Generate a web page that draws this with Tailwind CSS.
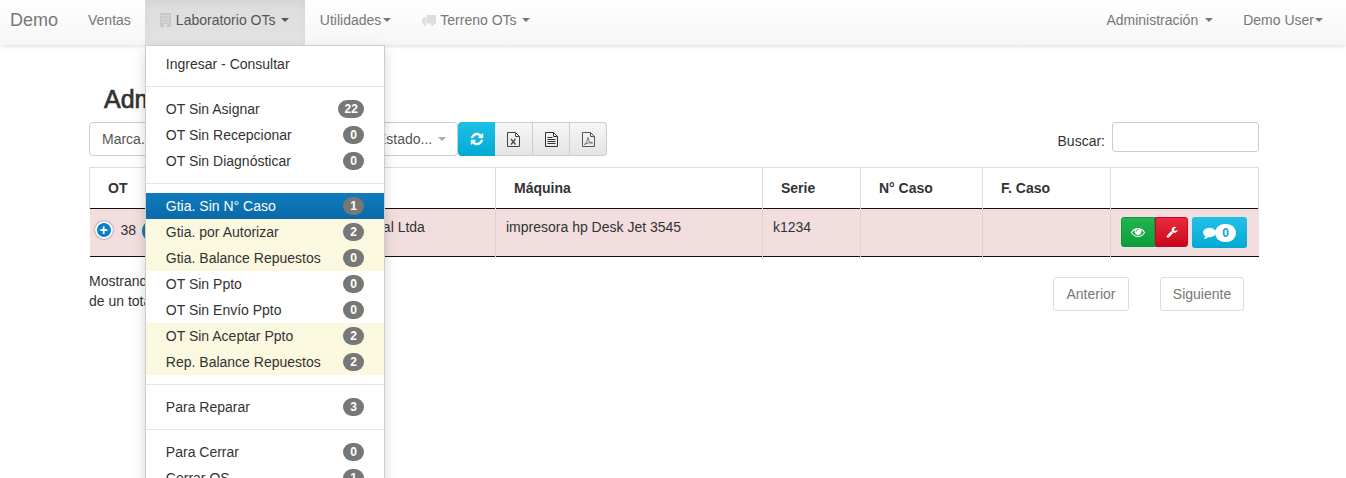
<!DOCTYPE html>
<html lang="es">

<head>
    <meta charset="UTF-8" />
    <meta name="viewport" content="width=device-width, initial-scale=1.0" />
    <title>Demo</title>
    <script src="https://cdn.jsdelivr.net/npm/@tailwindcss/browser@4"></script>
</head>

<body class="h-[478px] overflow-hidden bg-white text-[14px] leading-[20px] text-[#333] [font-family:'Liberation_Sans',Arial,sans-serif]">
    <!-- Navbar -->
    <nav class="relative z-10 flex h-[45px] justify-between bg-gradient-to-b from-white to-[#f6f6f6] text-[#777] shadow-[0_1px_4px_rgba(0,0,0,0.15)]">
        <ul class="flex items-center">
            <li class="pb-[5px] pl-[10px] pr-[14px] text-[18px]">Demo</li>
            <li class="pb-[5px] pl-[16px] pr-[14px]">Ventas</li>
            <li class="relative flex h-full w-[160px] items-center bg-gradient-to-b from-[#dcdcdc] to-[#e3e3e3] pb-[5px] pl-[15px] text-[#555] shadow-[inset_0_3px_9px_rgba(0,0,0,0.04)]">
                <svg class="mr-[5px] h-[14px] w-[11px] text-[#c8c8c8]" viewBox="0 0 11 14" fill="currentColor">
                    <path fill-rule="evenodd" d="M0 0h11v14H0zM2 2v1.500h1.500V2zM4.750 2v1.500h1.500V2zM7.500 2v1.500H9V2zM2 5v1.500h1.500V5zM4.750 5v1.500h1.500V5zM7.500 5v1.500H9V5zM2 8v1.500h1.500V8zM4.750 8v1.500h1.500V8zM7.500 8v1.500H9V8zM4 11v3h3v-3z" />
                </svg>
                Laboratorio OTs
                <span class="ml-[6px] inline-block border-x-4 border-t-4 border-x-transparent border-t-current"></span>

                <!-- Dropdown -->
                <div class="absolute left-0 top-[45px] w-[240px] border border-[#ccc] bg-white py-[5px] text-[#333] shadow-[0_6px_12px_rgba(0,0,0,0.175)]">
                    <a class="flex h-[26px] items-center justify-between px-[20px]">Ingresar - Consultar</a>
                    <div class="my-[9px] h-px bg-[#e5e5e5]"></div>
                    <a class="flex h-[26px] items-center justify-between px-[20px]">OT Sin Asignar <span class="-mt-[1px] rounded-[10px] bg-[#777] px-[6px] py-[3px] text-[12px] font-bold leading-[12px] text-white">22</span></a>
                    <a class="flex h-[26px] items-center justify-between px-[20px]">OT Sin Recepcionar <span class="-mt-[1px] rounded-[10px] bg-[#777] px-[7px] py-[3px] text-[12px] font-bold leading-[12px] text-white">0</span></a>
                    <a class="flex h-[26px] items-center justify-between px-[20px]">OT Sin Diagnósticar <span class="-mt-[1px] rounded-[10px] bg-[#777] px-[7px] py-[3px] text-[12px] font-bold leading-[12px] text-white">0</span></a>
                    <div class="my-[9px] h-px bg-[#e5e5e5]"></div>
                    <a class="flex h-[26px] items-center justify-between bg-gradient-to-b from-[#0f7cbd] to-[#0a69a8] px-[20px] text-white">Gtia. Sin N° Caso <span class="-mt-[1px] rounded-[10px] bg-[#777] px-[7px] py-[3px] text-[12px] font-bold leading-[12px] text-white">1</span></a>
                    <a class="flex h-[26px] items-center justify-between bg-[#fbf8e0] px-[20px]">Gtia. por Autorizar <span class="-mt-[1px] rounded-[10px] bg-[#777] px-[7px] py-[3px] text-[12px] font-bold leading-[12px] text-white">2</span></a>
                    <a class="flex h-[26px] items-center justify-between bg-[#fbf8e0] px-[20px]">Gtia. Balance Repuestos <span class="-mt-[1px] rounded-[10px] bg-[#777] px-[7px] py-[3px] text-[12px] font-bold leading-[12px] text-white">0</span></a>
                    <a class="flex h-[26px] items-center justify-between px-[20px]">OT Sin Ppto <span class="-mt-[1px] rounded-[10px] bg-[#777] px-[7px] py-[3px] text-[12px] font-bold leading-[12px] text-white">0</span></a>
                    <a class="flex h-[26px] items-center justify-between px-[20px]">OT Sin Envío Ppto <span class="-mt-[1px] rounded-[10px] bg-[#777] px-[7px] py-[3px] text-[12px] font-bold leading-[12px] text-white">0</span></a>
                    <a class="flex h-[26px] items-center justify-between bg-[#fbf8e0] px-[20px]">OT Sin Aceptar Ppto <span class="-mt-[1px] rounded-[10px] bg-[#777] px-[7px] py-[3px] text-[12px] font-bold leading-[12px] text-white">2</span></a>
                    <a class="flex h-[26px] items-center justify-between bg-[#fbf8e0] px-[20px]">Rep. Balance Repuestos <span class="-mt-[1px] rounded-[10px] bg-[#777] px-[7px] py-[3px] text-[12px] font-bold leading-[12px] text-white">2</span></a>
                    <div class="my-[9px] h-px bg-[#e5e5e5]"></div>
                    <a class="flex h-[26px] items-center justify-between px-[20px]">Para Reparar <span class="-mt-[1px] rounded-[10px] bg-[#777] px-[7px] py-[3px] text-[12px] font-bold leading-[12px] text-white">3</span></a>
                    <div class="my-[9px] h-px bg-[#e5e5e5]"></div>
                    <a class="flex h-[26px] items-center justify-between px-[20px]">Para Cerrar <span class="-mt-[1px] rounded-[10px] bg-[#777] px-[7px] py-[3px] text-[12px] font-bold leading-[12px] text-white">0</span></a>
                    <a class="flex h-[26px] items-center justify-between px-[20px]">Cerrar OS <span class="-mt-[1px] rounded-[10px] bg-[#777] px-[7px] py-[3px] text-[12px] font-bold leading-[12px] text-white">1</span></a>
                </div>
            </li>
            <li class="flex items-center pb-[5px] pl-[15px] pr-[16px]">Utilidades<span class="ml-[2px] inline-block border-x-4 border-t-4 border-x-transparent border-t-current"></span></li>
            <li class="flex items-center px-[15px] pb-[5px]">
                <svg class="mr-[4px] h-[11px] w-[14px] text-[#dcdcdc]" viewBox="0 0 14 11" fill="currentColor">
                    <path d="M4.500 0H14v8.500H4.500zM3.700 2.500H1.500L0 5v3.500h3.700z" />
                    <circle cx="3" cy="9.500" r="1.500" />
                    <circle cx="10.500" cy="9.500" r="1.500" />
                </svg>
                Terreno OTs
                <span class="ml-[5px] inline-block border-x-4 border-t-4 border-x-transparent border-t-current"></span>
            </li>
        </ul>
        <ul class="flex items-center pr-[23px]">
            <li class="flex items-center px-[15px] pb-[5px]">Administración<span class="ml-[7px] inline-block border-x-4 border-t-4 border-x-transparent border-t-current"></span></li>
            <li class="flex items-center pb-[5px] pl-[15px]">Demo User<span class="ml-[1px] inline-block border-x-4 border-t-4 border-x-transparent border-t-current"></span></li>
        </ul>
    </nav>

    <!-- Content -->
    <main class="pl-[89px] pr-[87px] pt-[36px]">
        <h1 class="h-[41px] pl-[15px] text-[25px] font-normal leading-[36px] text-[#333] [-webkit-text-stroke:0.7px_#333]">Administración de OTs</h1>

        <div class="flex items-start justify-between">
            <div class="flex">
                <div class="flex h-[34px] w-[100px] items-center rounded-[4px] border border-[#ccc] pl-[12px] text-[#555]">Marca...</div>
                <div class="ml-[5px] h-[34px] w-[169px] rounded-[4px] border border-[#ccc]"></div>
                <div class="flex h-[34px] w-[95px] items-center justify-between rounded-[4px] border border-[#ccc] pl-[13px] pr-[11px] text-[#555]">Estado...<span class="inline-block border-x-4 border-t-4 border-x-transparent border-t-[#aaa]"></span></div>
                <div class="flex h-[34px] w-[37px] items-center justify-center rounded-l-[4px] bg-gradient-to-b from-[#1cc0e6] to-[#00aad4]">
                    <svg class="h-[14px] w-[14px] text-white" viewBox="0 0 1792 1792" fill="currentColor" stroke="currentColor" stroke-width="60">
                        <path d="M1639 1056q0 5-1 7-64 268-268 434.5t-478 166.5q-146 0-282.5-55t-243.5-157l-129 129q-19 19-45 19t-45-19-19-45v-448q0-26 19-45t45-19h448q26 0 45 19t19 45-19 45l-137 137q71 66 161 102t187 36q134 0 250-65t186-179q11-17 53-117 8-23 30-23h192q13 0 22.5 9.5t9.5 22.5zm25-800v448q0 26-19 45t-45 19h-448q-26 0-45-19t-19-45 19-45l138-138q-148-137-349-137-134 0-250 65t-186 179q-11 17-53 117-8 23-30 23h-199q-13 0-22.5-9.5t-9.5-22.5v-7q65-268 270-434.5t480-166.5q146 0 284 55.5t245 156.5l130-129q19-19 45-19t45 19 19 45z" />
                    </svg>
                </div>
                <div class="flex h-[34px] w-[38px] items-center justify-center border-y border-r border-[#ccc] bg-gradient-to-b from-[#f7f7f7] to-[#e4e4e4]">
                    <svg class="h-[15px] w-[13px] text-[#444]" viewBox="0 0 13 15" fill="none" stroke="currentColor">
                        <path d="M.5.5h8l4 4v10H.5zM8.500.5v4h4" />
                        <path stroke-width="1.200" d="M4 7l4.500 5.500M8.500 7L4 12.500" />
                    </svg>
                </div>
                <div class="flex h-[34px] w-[37px] items-center justify-center border-y border-r border-[#ccc] bg-gradient-to-b from-[#f7f7f7] to-[#e4e4e4]">
                    <svg class="h-[15px] w-[13px] text-[#333]" viewBox="0 0 13 15" fill="none" stroke="currentColor">
                        <path d="M.5.5h8l4 4v10H.5zM8.500.5v4h4" />
                        <path d="M2.500 5.500h5M2.500 7.500h8M2.500 9.500h8M2.500 11.500h8" />
                    </svg>
                </div>
                <div class="flex h-[34px] w-[37px] items-center justify-center rounded-r-[4px] border-y border-r border-[#ccc] bg-gradient-to-b from-[#f7f7f7] to-[#e4e4e4]">
                    <svg class="h-[15px] w-[13px] text-[#555]" viewBox="0 0 13 15" fill="none" stroke="currentColor">
                        <path d="M.5.5h8l4 4v10H.5zM8.500.5v4h4" />
                        <path stroke-width=".8" d="M2.500 12.500C4.500 10.500 6 7.500 6 5.500c0 3 1.500 5 4.500 5.500-3-.5-5.500 0-8 1.500z" />
                    </svg>
                </div>
            </div>
            <label class="flex items-center gap-[7px]">
                <span class="mt-[8px]">Buscar:</span>
                <span class="block h-[30px] w-[147px] rounded-[3px] border border-[#ccc]"></span>
            </label>
        </div>

        <table class="mt-[11px] w-[1169px] table-fixed border-collapse">
            <thead>
                <tr class="h-[41px] border-b border-t border-b-[#111] border-t-[#ddd] text-left font-bold">
                    <th class="w-[186px] border-l border-[#ddd] pl-[18px] font-bold">OT</th>
                    <th class="w-[220px] border-r border-[#ddd] pl-[18px] font-bold">Cliente</th>
                    <th class="w-[267px] border-r border-[#ddd] pl-[18px] font-bold">Máquina</th>
                    <th class="w-[98px] border-r border-[#ddd] pl-[18px] font-bold">Serie</th>
                    <th class="w-[122px] border-r border-[#ddd] pl-[18px] font-bold">N° Caso</th>
                    <th class="w-[128px] border-r border-[#ddd] pl-[18px] font-bold">F. Caso</th>
                    <th class="w-[148px] border-r border-[#ddd]"></th>
                </tr>
            </thead>
            <tbody>
                <tr class="h-[48px] border-b border-b-[#111] bg-[#f2dede] align-top">
                    <td class="pl-[5px] pt-[8px]">
                        <div class="flex items-center">
                            <span class="flex h-[18px] w-[18px] items-center justify-center rounded-full border-2 border-white bg-[#0b7ec4] text-[14px] font-bold leading-none text-white shadow-[0_0_2px_#555]">+</span>
                            <span class="ml-[8px]">38</span>
                            <span class="ml-[6px] mt-[3px] h-[22px] w-[30px] rounded-[11px] bg-[#167f93]"></span>
                        </div>
                    </td>
                    <td class="border-r border-[#e6cfcf] pl-[14px] pt-[8px]">Demo Comercial Ltda</td>
                    <td class="border-r border-[#e6cfcf] pl-[10px] pt-[8px]">impresora hp Desk Jet 3545</td>
                    <td class="border-r border-[#e6cfcf] pl-[10px] pt-[8px]">k1234</td>
                    <td class="border-r border-[#e6cfcf]"></td>
                    <td class="border-r border-[#e6cfcf]"></td>
                    <td class="pl-[10px] pt-[8px]">
                        <div class="flex items-start">
                            <span class="flex h-[30px] w-[34px] items-center justify-center rounded-l-[3px] border border-[#0c9a3c] bg-gradient-to-b from-[#22b44e] to-[#0a9e3b]">
                                <svg class="h-[14px] w-[14px] text-white" viewBox="0 0 1792 1792" fill="currentColor">
                                    <path d="M1664 960q-152-236-381-353 61 104 61 225 0 185-131.5 316.5t-316.5 131.500-316.500-131.500-131.500-316.500q0-121 61-225-229 117-381 353 133 205 333.500 326.500t434.500 121.500 434.500-121.500 333.500-326.500zm-720-384q0-20-14-34t-34-14q-125 0-214.500 89.500t-89.500 214.500q0 20 14 34t34 14 34-14 14-34q0-86 61-147t147-61q20 0 34-14t14-34zm848 384q0 34-20 69-140 230-376.500 368.500t-499.500 138.500-499.500-139-376.500-368q-20-35-20-69t20-69q140-229 376.500-368t499.500-139 499.500 139 376.500 368q20 35 20 69z" />
                                </svg>
                            </span>
                            <span class="flex h-[30px] w-[33px] items-center justify-center rounded-r-[3px] border border-[#c40a20] bg-gradient-to-b from-[#ea2a3c] to-[#c9021a]">
                                <svg class="h-[12px] w-[12px] text-white" viewBox="0 0 1792 1792" fill="currentColor">
                                    <path d="M448 1472q0-26-19-45t-45-19-45 19-19 45 19 45 45 19 45-19 19-45zm644-420l-682 682q-37 37-90 37-52 0-91-37l-106-108q-38-36-38-90 0-53 38-91l681-681q39 98 114.500 173.500t173.500 114.500zm634-435q0 39-23 106-47 134-164.500 217.500t-258.500 83.500q-185 0-316.500-131.500t-131.500-316.500 131.500-316.500 316.500-131.500q58 0 121.500 16.500t107.500 46.500q16 11 16 28t-16 28l-293 169v224l193 107q5-3 79-48.500t135.500-81 70.500-35.500q15 0 23.500 10t8.500 25z" />
                                </svg>
                            </span>
                            <span class="ml-[4px] flex h-[31px] w-[55px] items-center justify-center rounded-[3px] bg-gradient-to-b from-[#22c0e6] to-[#00aad4]">
                                <svg class="h-[13px] w-[13px] text-white" viewBox="0 0 1792 1792" fill="currentColor">
                                    <path d="M1792 896q0 174-120 321.500t-326 233-450 85.500q-70 0-145-8-198 175-460 242-49 14-114 22-17 2-30.500-9t-17.500-29v-1q-3-4-.5-12t2-10 4.500-9.500l6-9 7-8.500 8-9q7-8 31-34.500t34.500-38 31-39.500 32.500-51 27-59 26-76q-157-89-247.500-220t-90.500-281q0-130 71-248.500t191-204.500 286-136.500 348-50.500q244 0 450 85.500t326 233 120 321.500z" />
                                </svg>
                                <span class="-ml-[1px] rounded-[10px] bg-white px-[7px] py-[3px] text-[12px] font-bold leading-[12px] text-[#10a5cc]">0</span>
                            </span>
                        </div>
                    </td>
                </tr>
            </tbody>
        </table>

        <div class="mt-[14px] flex items-start justify-between pr-[15px]">
            <div class="w-[300px]">Mostrando registros del 1 al 1<br>de un total de 1 registros</div>
            <div class="flex pt-[6px] text-[#777]">
                <span class="flex h-[34px] w-[76px] items-center justify-center rounded-[3px] border border-[#ddd]">Anterior</span>
                <span class="ml-[31px] flex h-[34px] w-[84px] items-center justify-center rounded-[3px] border border-[#ddd]">Siguiente</span>
            </div>
        </div>
    </main>
</body>

</html>
